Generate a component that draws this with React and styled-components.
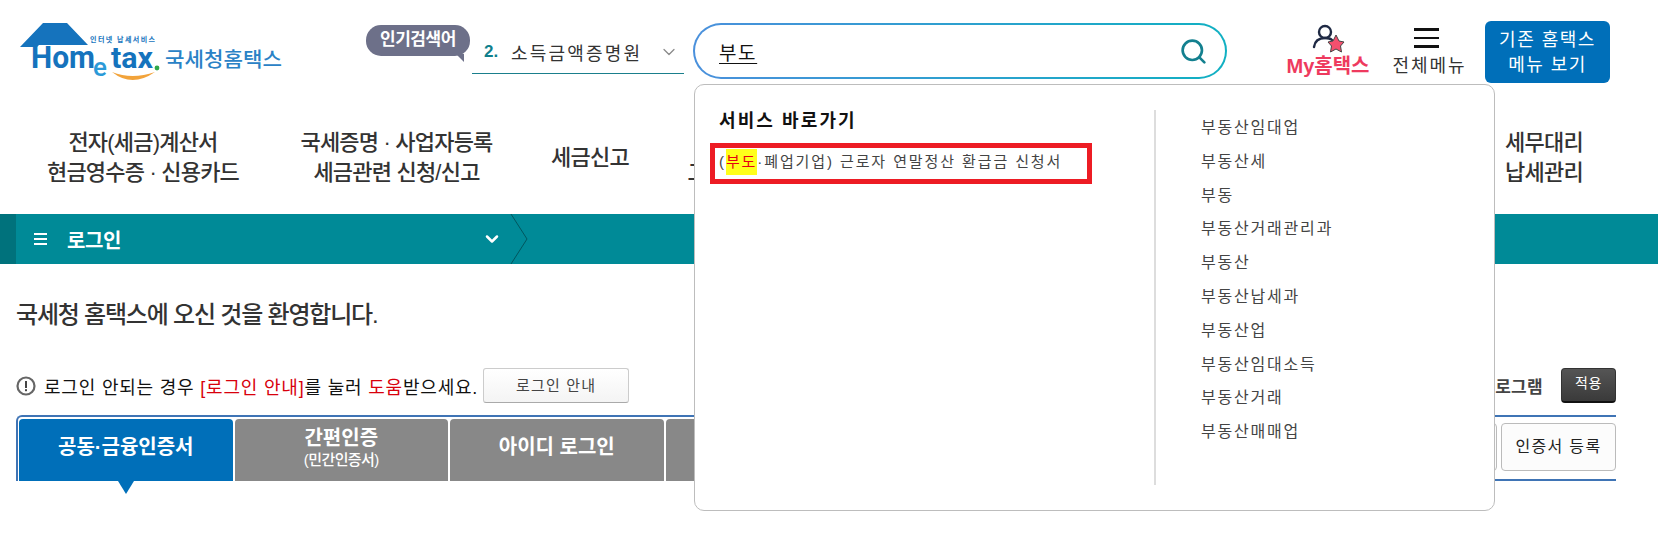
import React from 'react';
import styled, { createGlobalStyle } from 'styled-components';
import { Search, ChevronDown } from 'lucide-react';

const KR = `"Liberation Sans", "Noto Sans CJK KR", sans-serif`;

const GlobalStyle = createGlobalStyle`
  html, body { margin: 0; padding: 0; background: #fff; overflow: hidden; }
  body { font-family: ${KR}; color: #222; }
`;

const suggestions = [
  '부동산임대업',
  '부동산세',
  '부동',
  '부동산거래관리과',
  '부동산',
  '부동산납세과',
  '부동산업',
  '부동산임대소득',
  '부동산거래',
  '부동산매매업',
];

const menus = [
  { w: 270, lines: ['전자(세금)계산서', '현금영수증 · 신용카드'] },
  { w: 237, lines: ['국세증명 · 사업자등록', '세금관련 신청/신고'] },
  { w: 150, lines: ['세금신고'] },
  { w: 140, lines: ['납부', '고지 · 환급'] },
  { grow: true, lines: [] },
  { w: 168, lines: ['세무대리', '납세관리'] },
];

const Logo = () => (
  <svg width="270" height="62" viewBox="0 0 270 62">
    <path d="M5 25 L28 1 L52 1 L73 23 L24 23 L22 25 Z" fill="#1573bd" />
    <path d="M97 50 Q117 66 140 50 Q117 58 97 50 Z" fill="#f2a33a" />
    <circle cx="142" cy="46" r="2.4" fill="#2fa84a" />
    <text x="75" y="20" fontSize="7" fontWeight="700" fill="#1573bd" fontFamily={KR} textLength="65">인터넷 납세서비스</text>
    <text x="16" y="46" fontSize="32" fontWeight="700" fill="#1573bd" fontFamily="Roboto, sans-serif" textLength="64" lengthAdjust="spacingAndGlyphs">Hom</text>
    <text x="78" y="54" fontSize="26" fontWeight="500" fill="#2b9ad8" fontFamily="Roboto, sans-serif">e</text>
    <text x="96" y="46" fontSize="30" fontWeight="700" fill="#1573bd" fontFamily="Roboto, sans-serif" textLength="42" lengthAdjust="spacingAndGlyphs">tax</text>
    <text x="150" y="45" fontSize="20" fontWeight="500" fill="#2a82c6" fontFamily={KR} textLength="117" lengthAdjust="spacingAndGlyphs">국세청홈택스</text>
  </svg>
);

const UserStar = () => (
  <svg width="34" height="30" viewBox="0 0 34 30">
    <circle cx="14" cy="9" r="6" fill="none" stroke="#1f2a44" strokeWidth="2.4" />
    <path d="M3 24 C4 17 9 15 14 15 C17 15 20 16 21 17" fill="none" stroke="#1f2a44" strokeWidth="2.4" strokeLinecap="round" />
    <path d="M25 12 L28 18 L33 19 L29.5 23 L30.5 29 L25 26 L19.5 29 L20.5 23 L17 19 L22 18 Z" fill="#f4506e" stroke="#444" strokeWidth="1" strokeLinejoin="round" />
  </svg>
);

const AlertIcon = () => (
  <svg width="20" height="20" viewBox="0 0 20 20">
    <circle cx="10" cy="10" r="8.5" fill="#fff" stroke="#666" strokeWidth="2.2" />
    <rect x="9" y="5" width="2" height="7" fill="#444" />
    <rect x="9" y="13.2" width="2" height="2" fill="#444" />
  </svg>
);

const BarArrow = () => (
  <svg width="20" height="50" viewBox="0 0 20 50">
    <path d="M1 0 L17 25 L1 50" fill="none" stroke="#00565e" strokeWidth="1" />
  </svg>
);

export default function App() {
  return (
    <Page>
      <GlobalStyle />
      <Header>
        <LogoBox>
          <Logo />
        </LogoBox>
        <Bubble>인기검색어</Bubble>
        <Rolling>
          <RankNo>2.</RankNo>
          <RankText>소득금액증명원</RankText>
          <ChevronDown size={20} color="#8a8a8a" strokeWidth={1.5} />
        </Rolling>
        <SearchWrap>
          <SearchBox>
            <Typed>부도</Typed>
            <Search size={29} color="#13808f" strokeWidth={2.2} />
          </SearchBox>
          <Dropdown>
            <ServiceCol>
              <ServiceTitle>서비스 바로가기</ServiceTitle>
              <RedBox>
                (<Mark>부도</Mark>·폐업기업) 근로자 연말정산 환급금 신청서
              </RedBox>
            </ServiceCol>
            <WordCol>
              {suggestions.map((s) => (
                <Word key={s}>{s}</Word>
              ))}
            </WordCol>
          </Dropdown>
        </SearchWrap>
        <MyHome>
          <UserStar />
          <MyLabel>My홈택스</MyLabel>
        </MyHome>
        <AllMenu>
          <Burger>
            <i />
            <i />
            <i />
          </Burger>
          <AllLabel>전체메뉴</AllLabel>
        </AllMenu>
        <OldButton>
          기존 홈택스
          <br />
          메뉴 보기
        </OldButton>
      </Header>

      <Menu>
        {menus.map((m, i) => (
          <MenuItem key={i} $w={m.w} $grow={m.grow}>
            {m.lines.map((l) => (
              <div key={l}>{l}</div>
            ))}
          </MenuItem>
        ))}
      </Menu>

      <Bar>
        <BarEdge />
        <BarCrumb>
          <BarLines>
            <i />
            <i />
            <i />
          </BarLines>
          <BarTitle>로그인</BarTitle>
          <ChevronDown size={20} color="#fff" strokeWidth={3} />
        </BarCrumb>
        <BarArrow />
      </Bar>

      <Content>
        <Welcome>국세청 홈택스에 오신 것을 환영합니다.</Welcome>
        <NoticeRow>
          <Notice>
            <AlertIcon />
            <NoticeText>
              로그인 안되는 경우 <Red>[로그인 안내]</Red>를 눌러 <Red>도움</Red>받으세요.
            </NoticeText>
            <GuideButton>로그인 안내</GuideButton>
          </Notice>
          <Apply>
            <ApplyText>보안프로그램</ApplyText>
            <ApplyButton>적용</ApplyButton>
          </Apply>
        </NoticeRow>
        <Frame>
          <Tab $active>
            공동·금융인증서
            <Pointer />
          </Tab>
          <Tab>
            간편인증
            <TabSub>(민간인증서)</TabSub>
          </Tab>
          <Tab>아이디 로그인</Tab>
          <Tab>생체 인증</Tab>
          <Tools>
            <ToolButton>인증서 찾기</ToolButton>
            <ToolButton>인증서 등록</ToolButton>
          </Tools>
        </Frame>
      </Content>
    </Page>
  );
}

const Page = styled.div`
  position: relative;
  width: 1658px;
  height: 549px;
  overflow: hidden;
`;

const Header = styled.header`
  display: flex;
  align-items: flex-start;
  height: 105px;
  padding: 0 49px 0 15px;
  box-sizing: border-box;
`;

const LogoBox = styled.div`
  width: 351px;
  margin-top: 22px;
  flex: none;
`;

const Bubble = styled.div`
  position: relative;
  flex: none;
  width: 104px;
  height: 31px;
  margin-top: 25px;
  margin-right: 2px;
  line-height: 29px;
  border-radius: 15px;
  background: #6d7089;
  color: #fff;
  font-size: 17px;
  font-weight: 700;
  text-align: center;
  letter-spacing: -0.4px;

  &::after {
    content: '';
    position: absolute;
    right: 6px;
    bottom: -6px;
    border-top: 8px solid #6d7089;
    border-left: 8px solid transparent;
  }
`;

const Rolling = styled.div`
  display: flex;
  align-items: center;
  flex: none;
  width: 212px;
  height: 44px;
  margin-top: 30px;
  padding: 0 0 0 12px;
  box-sizing: border-box;
  border-bottom: 1px solid #1a7f8c;
`;

const RankNo = styled.span`
  color: #0f7f8c;
  font-size: 17px;
  font-weight: 700;
  margin-right: 11px;
  width: 16px;
`;

const RankText = styled.span`
  font-size: 18px;
  letter-spacing: 2.2px;
  color: #333;
  width: 148px;
  white-space: nowrap;
`;

const SearchWrap = styled.div`
  position: relative;
  flex: none;
  width: 534px;
  margin-top: 23px;
  margin-left: 9px;
`;

const SearchBox = styled.div`
  display: flex;
  align-items: center;
  justify-content: space-between;
  height: 56px;
  box-sizing: border-box;
  padding: 0 17px 0 24px;
  border: 2px solid transparent;
  border-radius: 28px;
  background: linear-gradient(#fff, #fff) padding-box,
    linear-gradient(90deg, #4a90dc, #10b0c2) border-box;
`;

const Typed = styled.span`
  font-size: 19px;
  letter-spacing: 1.6px;
  color: #111;
  text-decoration: underline;
  text-underline-offset: 3px;
`;

const Dropdown = styled.div`
  position: absolute;
  z-index: 5;
  top: 61px;
  left: 1px;
  width: 801px;
  height: 427px;
  box-sizing: border-box;
  display: flex;
  background: #fff;
  border: 1px solid #bdbdbd;
  border-radius: 10px;
  padding: 25px 0 0 0;
`;

const ServiceCol = styled.div`
  width: 461px;
  height: 375px;
  flex: none;
  box-sizing: border-box;
  border-right: 2px solid #ddd;
  padding: 0 0 0 15px;
`;

const ServiceTitle = styled.div`
  font-size: 18px;
  font-weight: 700;
  letter-spacing: 2.1px;
  color: #111;
  padding-left: 9px;
  line-height: 22px;
`;

const RedBox = styled.div`
  width: 382px;
  height: 41px;
  box-sizing: border-box;
  margin-top: 11px;
  border: 5px solid #ed1c24;
  padding-left: 4px;
  font-size: 15px;
  line-height: 27px;
  letter-spacing: 1.9px;
  color: #444;
  white-space: nowrap;
`;

const Mark = styled.span`
  display: inline-block;
  background: #ffff1a;
  color: #e60012;
  line-height: 26px;
`;

const WordCol = styled.ul`
  list-style: none;
  margin: 0;
  padding: 1px 0 0 45px;
`;

const Word = styled.li`
  height: 33.8px;
  line-height: 33.8px;
  font-size: 16px;
  letter-spacing: 1.8px;
  color: #444;
`;

const MyHome = styled.div`
  flex: none;
  width: 84px;
  margin-left: 59px;
  margin-top: 23px;
  display: flex;
  flex-direction: column;
  align-items: center;
`;

const MyLabel = styled.div`
  font-size: 20px;
  font-weight: 700;
  color: #ee3a5e;
  white-space: nowrap;
  line-height: 22px;
  margin-top: 2px;
`;

const AllMenu = styled.div`
  flex: none;
  width: 75px;
  margin-left: 22px;
  margin-top: 28px;
  display: flex;
  flex-direction: column;
  align-items: center;
`;

const Burger = styled.div`
  display: flex;
  flex-direction: column;
  gap: 6px;
  margin-right: 6px;
  i {
    display: block;
    width: 25px;
    height: 2.5px;
    background: #111;
  }
`;

const AllLabel = styled.div`
  margin-top: 7px;
  font-size: 18px;
  letter-spacing: 2px;
  color: #333;
  white-space: nowrap;
  line-height: 22px;
`;

const OldButton = styled.div`
  flex: none;
  width: 125px;
  height: 62px;
  margin-left: 18px;
  margin-top: 21px;
  border-radius: 6px;
  background: #006fb9;
  color: #fff;
  font-size: 18px;
  line-height: 25px;
  letter-spacing: 1.5px;
  text-align: center;
  padding-top: 7px;
  box-sizing: border-box;
`;

const Menu = styled.nav`
  display: flex;
  align-items: center;
  height: 109px;
  padding: 0 30px 4px 8px;
  box-sizing: border-box;
`;

const MenuItem = styled.div`
  flex: ${({ $grow }) => ($grow ? '1' : 'none')};
  width: ${({ $w }) => ($w ? `${$w}px` : 'auto')};
  text-align: center;
  font-size: 22px;
  font-weight: 500;
  line-height: 30px;
  letter-spacing: -0.8px;
  color: #333;
  white-space: nowrap;
`;

const Bar = styled.div`
  display: flex;
  height: 50px;
  background: #008a97;
`;

const BarEdge = styled.div`
  width: 16px;
  background: #00727c;
`;

const BarCrumb = styled.div`
  display: flex;
  align-items: center;
  width: 494px;
  padding-left: 18px;
  box-sizing: border-box;
`;

const BarLines = styled.div`
  display: flex;
  flex-direction: column;
  gap: 3px;
  i {
    display: block;
    width: 13px;
    height: 2px;
    background: #fff;
  }
`;

const BarTitle = styled.span`
  color: #fff;
  font-size: 20px;
  font-weight: 700;
  letter-spacing: -0.4px;
  margin-left: 20px;
  width: 415px;
`;

const Content = styled.main`
  padding: 0 42px 0 16px;
`;

const Welcome = styled.h1`
  margin: 0;
  padding-top: 35px;
  font-size: 24px;
  line-height: 32px;
  font-weight: 500;
  letter-spacing: -1.2px;
  color: #333;
`;

const NoticeRow = styled.div`
  display: flex;
  justify-content: space-between;
  align-items: center;
  height: 35px;
  margin-top: 37px;
`;

const Notice = styled.div`
  display: flex;
  align-items: center;
`;

const NoticeText = styled.span`
  margin-left: 8px;
  font-size: 18px;
  letter-spacing: 0.8px;
  color: #111;
  white-space: nowrap;
`;

const Red = styled.span`
  color: #d8000c;
`;

const GuideButton = styled.div`
  margin-left: 5px;
  width: 146px;
  height: 35px;
  box-sizing: border-box;
  line-height: 33px;
  text-align: center;
  font-size: 15px;
  letter-spacing: 1.2px;
  color: #444;
  background: linear-gradient(#fff, #f4f4f4);
  border: 1px solid #ccc;
  border-bottom-color: #aaa;
  border-radius: 3px;
`;

const Apply = styled.div`
  display: flex;
  align-items: center;
`;

const ApplyText = styled.span`
  font-size: 17px;
  font-weight: 700;
  letter-spacing: 0.3px;
  color: #444;
  margin-right: 18px;
`;

const ApplyButton = styled.div`
  width: 55px;
  height: 35px;
  box-sizing: border-box;
  line-height: 29px;
  text-align: center;
  font-size: 14px;
  letter-spacing: 0.5px;
  color: #fff;
  background: linear-gradient(#555, #3a3a3a);
  border: 1px solid #333;
  border-bottom: 2px solid #111;
  border-radius: 4px;
`;

const Frame = styled.div`
  display: flex;
  gap: 2px;
  height: 66px;
  box-sizing: border-box;
  margin-top: 12px;
  padding: 2px 0 0 1px;
  border-top: 2px solid #3f74b5;
  border-left: 2px solid #3f74b5;
  border-top-left-radius: 6px;
`;

const Tab = styled.div`
  position: relative;
  flex: none;
  width: 213.5px;
  padding-bottom: 6px;
  box-sizing: border-box;
  display: flex;
  flex-direction: column;
  align-items: center;
  justify-content: center;
  border-radius: 4px 4px 0 0;
  background: ${({ $active }) => ($active ? '#006fb9' : '#888')};
  color: #fff;
  font-size: 20px;
  font-weight: 700;
  letter-spacing: 0;
  line-height: 24px;
`;

const TabSub = styled.span`
  font-size: 15px;
  font-weight: 500;
  letter-spacing: -0.6px;
  line-height: 19px;
`;

const Pointer = styled.span`
  position: absolute;
  left: 50%;
  bottom: -13px;
  margin-left: -8px;
  border-top: 13px solid #006fb9;
  border-left: 8px solid transparent;
  border-right: 8px solid transparent;
`;

const Tools = styled.div`
  flex: 1;
  display: flex;
  justify-content: flex-end;
  gap: 4px;
  padding-top: 4px;
  box-sizing: border-box;
  height: 62px;
  border-bottom: 2px solid #3f74b5;
`;

const ToolButton = styled.div`
  width: 115px;
  height: 48px;
  box-sizing: border-box;
  border: 1px solid #bbb;
  border-radius: 4px;
  background: #fcfcfc;
  line-height: 46px;
  text-align: center;
  font-size: 16px;
  letter-spacing: 1.3px;
  color: #222;
`;
